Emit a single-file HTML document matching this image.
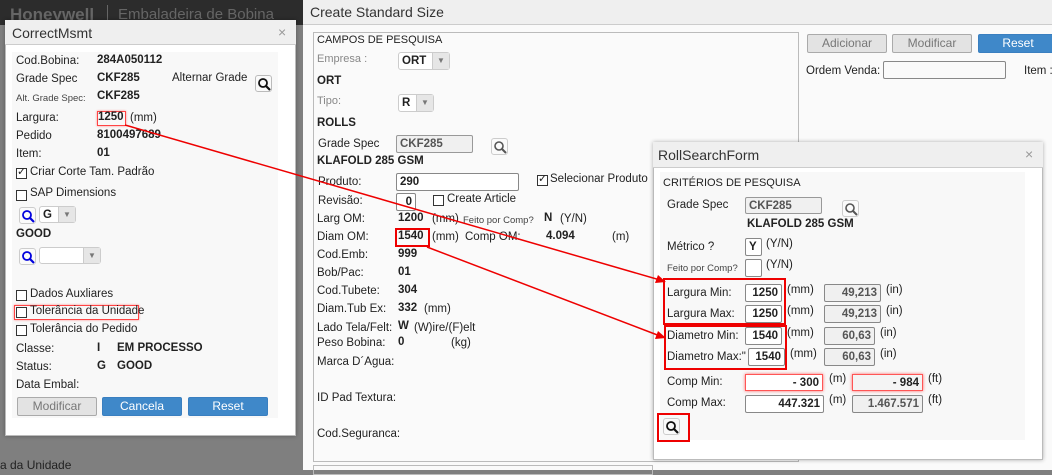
<!DOCTYPE html>
<html><head><meta charset="utf-8"><style>
*{box-sizing:border-box;margin:0;padding:0}
body{width:1052px;height:470px;position:relative;overflow:hidden;background:#7f7f7f;font-family:"Liberation Sans",Arial,sans-serif;font-size:11.5px;color:#222}
.a{position:absolute;white-space:nowrap}
.b{font-weight:bold}
.sm{font-size:9.5px;color:#444}
.inp{position:absolute;border:1px solid #888;background:#fff;border-radius:2px;font-weight:bold;font-size:11.5px;padding:1px 3px;line-height:14px}
.gr{background:#f0f0f0;color:#555}
.sel{position:absolute;border:1px solid #ccc;background:#fff;border-radius:3px;font-weight:bold;padding:1px 3px;line-height:14px}
.sel i{position:absolute;right:0;top:0;bottom:0;width:17px;background:#e6e6e6;border-left:1px solid #ccc;font-style:normal;font-size:8px;color:#777;text-align:center;line-height:16px}
.cb{position:absolute;width:11px;height:11px;border:1px solid #333;background:#fff}
.btn{position:absolute;height:19px;border-radius:2px;text-align:center;line-height:17px;font-size:12px}
.gb{background:#e3e3e3;border:1px solid #aaa;color:#777}
.bb{background:#3f88c9;border:1px solid #3a7fc0;color:#fff}
.srch{position:absolute;width:17px;height:17px;border:1px solid #ccc;border-radius:3px;background:#fafafa}
.rb{position:absolute;border:2px solid #e00}
.rg{position:absolute;border:1px solid #f55;box-shadow:0 0 3px #f66;background:#fff;font-weight:bold;text-align:right;padding:1px 3px;line-height:14px}
</style></head><body>
<div class="a" style="left:0;top:0;width:303px;height:25px;background:#2c2c2c"></div>
<div class="a b" style="left:10px;top:5px;font-size:17px;color:#666">Honeywell</div>
<div class="a" style="left:107px;top:5px;width:1px;height:18px;background:#666"></div>
<div class="a" style="left:118px;top:6px;font-size:15px;color:#666">Embaladeira de Bobina</div>
<div class="a" style="left:0;top:458px;font-size:12px;color:#222">a da Unidade</div>
<div class="a" style="left:303px;top:0;width:749px;height:470px;background:#fafafa"></div>
<div class="a" style="left:303px;top:0;width:749px;height:25px;background:#efefef;border-bottom:1px solid #ccc"></div>
<div class="a" style="left:310px;top:4px;font-size:14px;color:#333">Create Standard Size</div>
<div class="a" style="left:313px;top:32px;width:486px;height:430px;border:1px solid #bbb;background:#fafafa"></div>
<div class="a" style="left:313px;top:465px;width:340px;height:10px;border:1px solid #bbb"></div>
<div class="a" style="left:317px;top:34px;font-size:11px">CAMPOS DE PESQUISA</div>
<div class="a" style="left:317px;top:53px;color:#888;font-size:11px">Empresa :</div>
<div class="sel" style="left:398px;top:52px;width:52px;height:18px">ORT<i>▼</i></div>
<div class="a b" style="left:317px;top:75px">ORT</div>
<div class="a" style="left:317px;top:95px;color:#888;font-size:11px">Tipo:</div>
<div class="sel" style="left:398px;top:94px;width:36px;height:18px">R<i>▼</i></div>
<div class="a b" style="left:317px;top:117px">ROLLS</div>
<div class="a" style="left:318px;top:138px">Grade Spec</div>
<div class="inp gr" style="left:396px;top:135px;width:77px;height:18px;border-color:#999">CKF285</div>
<div class="srch" style="left:491px;top:138px"></div>
<svg class="a" style="left:493px;top:140px" width="14" height="14"><circle cx="6" cy="6" r="4" fill="none" stroke="#555" stroke-width="1.6"/><line x1="9" y1="9" x2="13" y2="13" stroke="#555" stroke-width="2"/></svg>
<div class="a b" style="left:317px;top:155px">KLAFOLD 285 GSM</div>
<div class="a" style="left:318px;top:176px">Produto:</div>
<div class="inp" style="left:396px;top:173px;width:123px;height:18px">290</div>
<div class="cb" style="left:537px;top:175px"></div><div class="a" style="left:538px;top:172px;font-size:11px">✓</div>
<div class="a" style="left:550px;top:173px">Selecionar Produto</div>
<div class="a" style="left:318px;top:195px">Revisão:</div>
<div class="inp" style="left:396px;top:193px;width:20px;height:18px;text-align:right">0</div>
<div class="cb" style="left:433px;top:195px"></div>
<div class="a" style="left:447px;top:193px">Create Article</div>
<div class="a" style="left:317px;top:213px">Larg OM:</div>
<div class="a b" style="left:398px;top:212px">1200</div><div class="a" style="left:432px;top:213px">(mm)</div>
<div class="a sm" style="left:463px;top:215px">Feito por Comp?</div>
<div class="a b" style="left:544px;top:212px">N</div><div class="a" style="left:560px;top:213px">(Y/N)</div>
<div class="a" style="left:317px;top:231px">Diam OM:</div>
<div class="rb" style="left:395px;top:228px;width:35px;height:19px"></div>
<div class="a b" style="left:398px;top:230px">1540</div><div class="a" style="left:432px;top:231px">(mm)</div>
<div class="a" style="left:465px;top:231px">Comp OM:</div><div class="a b" style="left:546px;top:230px">4.094</div><div class="a" style="left:612px;top:231px">(m)</div>
<div class="a" style="left:317px;top:249px">Cod.Emb:</div><div class="a b" style="left:398px;top:248px">999</div>
<div class="a" style="left:317px;top:267px">Bob/Pac:</div><div class="a b" style="left:398px;top:266px">01</div>
<div class="a" style="left:317px;top:285px">Cod.Tubete:</div><div class="a b" style="left:398px;top:284px">304</div>
<div class="a" style="left:317px;top:303px">Diam.Tub Ex:</div><div class="a b" style="left:398px;top:302px">332</div><div class="a" style="left:424px;top:303px">(mm)</div>
<div class="a" style="left:317px;top:322px">Lado Tela/Felt:</div><div class="a b" style="left:398px;top:320px">W</div><div class="a" style="left:414px;top:322px">(W)ire/(F)elt</div>
<div class="a" style="left:317px;top:337px">Peso Bobina:</div><div class="a b" style="left:398px;top:336px">0</div><div class="a" style="left:451px;top:337px">(kg)</div>
<div class="a" style="left:317px;top:356px">Marca D´Agua:</div>
<div class="a" style="left:317px;top:392px">ID Pad Textura:</div>
<div class="a" style="left:317px;top:428px">Cod.Seguranca:</div>
<div class="btn gb" style="left:807px;top:34px;width:80px">Adicionar</div>
<div class="btn gb" style="left:892px;top:34px;width:80px">Modificar</div>
<div class="btn bb" style="left:978px;top:34px;width:80px">Reset</div>
<div class="a" style="left:806px;top:65px">Ordem Venda:</div>
<div class="a" style="left:883px;top:61px;width:123px;height:18px;border:1px solid #888;border-radius:2px;background:#fafafa"></div>
<div class="a" style="left:1024px;top:65px">Item :</div>
<div class="a" style="left:5px;top:20px;width:291px;height:416px;background:#fff;border:1px solid #bbb;box-shadow:0 0 4px rgba(0,0,0,.3)"></div>
<div class="a" style="left:5px;top:20px;width:291px;height:25px;background:#efefef;border-bottom:1px solid #ccc"></div>
<div class="a" style="left:12px;top:25px;font-size:14px;color:#333">CorrectMsmt</div>
<div class="a" style="left:278px;top:24px;font-size:14px;color:#999">×</div>
<div class="a" style="left:12px;top:52px;width:266px;height:366px;background:#f8f8f8"></div>
<div class="a" style="left:16px;top:55px">Cod.Bobina:</div><div class="a b" style="left:97px;top:54px">284A050112</div>
<div class="a" style="left:16px;top:73px">Grade Spec</div><div class="a b" style="left:97px;top:72px">CKF285</div>
<div class="a" style="left:172px;top:72px">Alternar Grade</div>
<div class="srch" style="left:255px;top:75px;border-color:#bbb"></div>
<svg class="a" style="left:257px;top:77px" width="14" height="14"><circle cx="6" cy="6" r="4" fill="none" stroke="#111" stroke-width="1.8"/><line x1="9" y1="9" x2="13" y2="13" stroke="#111" stroke-width="2.2"/></svg>
<div class="a sm" style="left:16px;top:93px">Alt. Grade Spec:</div><div class="a b" style="left:97px;top:90px">CKF285</div>
<div class="a" style="left:16px;top:112px">Largura:</div>
<div class="a" style="left:97px;top:111px;width:29px;height:15px;border:1px solid #f44;box-shadow:0 0 2px #f88"></div>
<div class="a b" style="left:98px;top:111px">1250</div><div class="a" style="left:130px;top:112px">(mm)</div>
<div class="a" style="left:16px;top:130px">Pedido</div><div class="a b" style="left:97px;top:129px">8100497689</div>
<div class="a" style="left:16px;top:148px">Item:</div><div class="a b" style="left:97px;top:147px">01</div>
<div class="cb" style="left:16px;top:168px"></div><div class="a" style="left:17px;top:165px;font-size:11px">✓</div>
<div class="a" style="left:30px;top:166px">Criar Corte Tam. Padrão</div>
<div class="cb" style="left:16px;top:190px"></div><div class="a" style="left:30px;top:187px">SAP Dimensions</div>
<div class="srch" style="left:19px;top:207px"></div>
<svg class="a" style="left:21px;top:209px" width="14" height="14"><circle cx="6" cy="6" r="4" fill="none" stroke="#00d" stroke-width="1.8"/><line x1="9" y1="9" x2="13" y2="13" stroke="#00d" stroke-width="2.2"/></svg>
<div class="sel" style="left:39px;top:206px;width:37px;height:17px">G<i>▼</i></div>
<div class="a b" style="left:16px;top:228px">GOOD</div>
<div class="srch" style="left:19px;top:248px"></div>
<svg class="a" style="left:21px;top:250px" width="14" height="14"><circle cx="6" cy="6" r="4" fill="none" stroke="#00d" stroke-width="1.8"/><line x1="9" y1="9" x2="13" y2="13" stroke="#00d" stroke-width="2.2"/></svg>
<div class="sel" style="left:39px;top:247px;width:62px;height:17px"><i>▼</i></div>
<div class="cb" style="left:16px;top:290px"></div><div class="a" style="left:30px;top:288px">Dados Auxliares</div>
<div class="a" style="left:14px;top:305px;width:125px;height:15px;border:1px solid #f44;box-shadow:0 0 2px #f88"></div>
<div class="cb" style="left:16px;top:307px"></div><div class="a" style="left:30px;top:305px">Tolerância da Unidade</div>
<div class="cb" style="left:16px;top:325px"></div><div class="a" style="left:30px;top:323px">Tolerância do Pedido</div>
<div class="a" style="left:16px;top:343px">Classe:</div><div class="a b" style="left:97px;top:342px">I</div><div class="a b" style="left:117px;top:342px">EM PROCESSO</div>
<div class="a" style="left:16px;top:361px">Status:</div><div class="a b" style="left:97px;top:360px">G</div><div class="a b" style="left:117px;top:360px">GOOD</div>
<div class="a" style="left:16px;top:379px">Data Embal:</div>
<div class="btn gb" style="left:17px;top:397px;width:80px">Modificar</div>
<div class="btn bb" style="left:102px;top:397px;width:80px">Cancela</div>
<div class="btn bb" style="left:188px;top:397px;width:80px">Reset</div>
<div class="a" style="left:653px;top:142px;width:390px;height:318px;background:#fff;border:1px solid #bbb;box-shadow:0 0 4px rgba(0,0,0,.3)"></div>
<div class="a" style="left:653px;top:142px;width:390px;height:26px;background:#efefef;border-bottom:1px solid #ccc"></div>
<div class="a" style="left:658px;top:147px;font-size:14px;color:#333">RollSearchForm</div>
<div class="a" style="left:1025px;top:146px;font-size:14px;color:#999">×</div>
<div class="a" style="left:660px;top:172px;width:365px;height:268px;background:#f8f8f8"></div>
<div class="a" style="left:663px;top:177px;font-size:11px">CRITÉRIOS DE PESQUISA</div>
<div class="a" style="left:667px;top:199px">Grade Spec</div>
<div class="inp gr" style="left:745px;top:197px;width:77px;height:17px;border-color:#999">CKF285</div>
<div class="srch" style="left:842px;top:200px"></div>
<svg class="a" style="left:844px;top:202px" width="14" height="14"><circle cx="6" cy="6" r="4" fill="none" stroke="#555" stroke-width="1.6"/><line x1="9" y1="9" x2="13" y2="13" stroke="#555" stroke-width="2"/></svg>
<div class="a b" style="left:747px;top:218px">KLAFOLD 285 GSM</div>
<div class="a" style="left:667px;top:241px">Métrico ?</div>
<div class="inp" style="left:745px;top:238px;width:17px;height:18px">Y</div><div class="a" style="left:766px;top:238px">(Y/N)</div>
<div class="a sm" style="left:667px;top:263px">Feito por Comp?</div>
<div class="inp" style="left:745px;top:259px;width:17px;height:18px"></div><div class="a" style="left:766px;top:259px">(Y/N)</div>
<div class="a" style="left:667px;top:287px">Largura Min:</div>
<div class="inp" style="left:745px;top:284px;width:37px;height:18px;text-align:right">1250</div><div class="a" style="left:787px;top:284px">(mm)</div>
<div class="inp gr" style="left:824px;top:284px;width:57px;height:18px;text-align:right">49,213</div><div class="a" style="left:886px;top:284px">(in)</div>
<div class="a" style="left:667px;top:308px">Largura Max:</div>
<div class="inp" style="left:745px;top:305px;width:37px;height:18px;text-align:right">1250</div><div class="a" style="left:787px;top:305px">(mm)</div>
<div class="inp gr" style="left:824px;top:305px;width:57px;height:18px;text-align:right">49,213</div><div class="a" style="left:886px;top:305px">(in)</div>
<div class="a" style="left:667px;top:330px">Diametro Min:</div>
<div class="inp" style="left:745px;top:327px;width:37px;height:18px;text-align:right">1540</div><div class="a" style="left:787px;top:327px">(mm)</div>
<div class="inp gr" style="left:824px;top:327px;width:51px;height:18px;text-align:right">60,63</div><div class="a" style="left:880px;top:327px">(in)</div>
<div class="a" style="left:667px;top:351px">Diametro Max:"</div>
<div class="inp" style="left:748px;top:348px;width:37px;height:18px;text-align:right">1540</div><div class="a" style="left:790px;top:348px">(mm)</div>
<div class="inp gr" style="left:824px;top:348px;width:51px;height:18px;text-align:right">60,63</div><div class="a" style="left:880px;top:348px">(in)</div>
<div class="rb" style="left:663px;top:278px;width:123px;height:47px"></div>
<div class="rb" style="left:664px;top:325px;width:123px;height:45px"></div>
<div class="a" style="left:667px;top:376px">Comp Min:</div>
<div class="rg" style="left:745px;top:374px;width:78px;height:17px">- 300</div><div class="a" style="left:829px;top:373px">(m)</div>
<div class="rg" style="left:852px;top:374px;width:71px;height:17px;background:#f4f4f4">- 984</div><div class="a" style="left:928px;top:373px">(ft)</div>
<div class="a" style="left:667px;top:397px">Comp Max:</div>
<div class="inp" style="left:745px;top:395px;width:79px;height:18px;text-align:right">447.321</div><div class="a" style="left:829px;top:394px">(m)</div>
<div class="inp gr" style="left:852px;top:395px;width:71px;height:18px;text-align:right">1.467.571</div><div class="a" style="left:928px;top:394px">(ft)</div>
<div class="rb" style="left:657px;top:413px;width:33px;height:29px"></div>
<div class="srch" style="left:663px;top:418px"></div>
<svg class="a" style="left:665px;top:420px" width="14" height="14"><circle cx="6" cy="6" r="4" fill="none" stroke="#111" stroke-width="1.8"/><line x1="9" y1="9" x2="13" y2="13" stroke="#111" stroke-width="2.2"/></svg>
<svg class="a" style="left:0;top:0" width="1052" height="470">
<line x1="125" y1="125" x2="660" y2="280" stroke="#e00" stroke-width="1.5"/>
<polygon points="666,282 655,283 658,275" fill="#e00"/>
<line x1="427" y1="247" x2="660" y2="336" stroke="#e00" stroke-width="1.5"/>
<polygon points="666,338 655,339 658,331" fill="#e00"/>
</svg>
</body></html>
